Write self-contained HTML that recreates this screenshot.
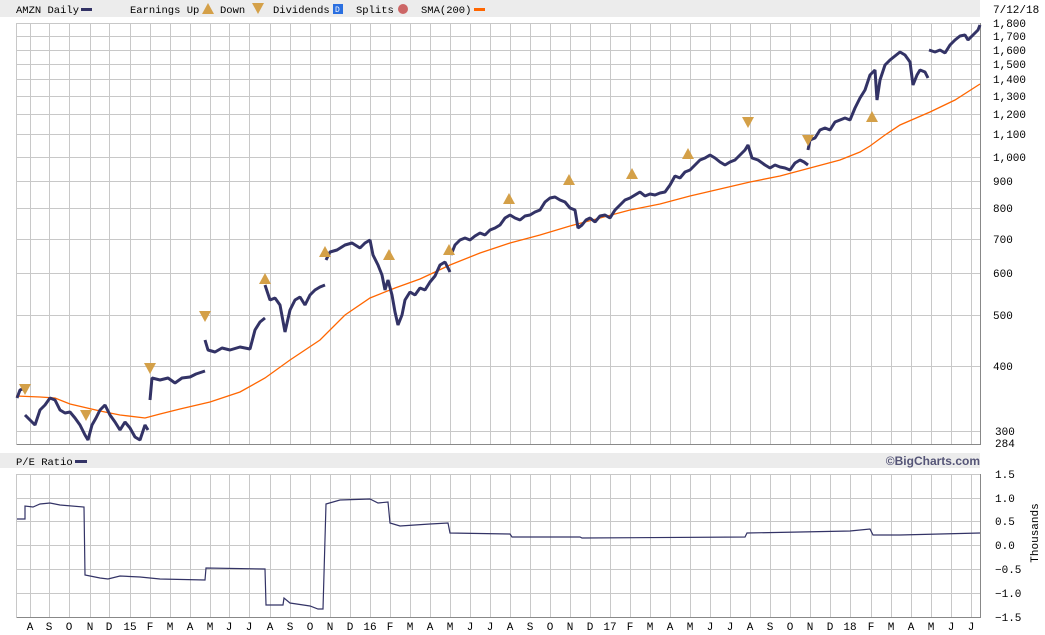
<!DOCTYPE html>
<html><head><meta charset="utf-8"><style>
html,body{margin:0;padding:0;background:#fff;width:1045px;height:635px;overflow:hidden}
svg{display:block;font-family:"Liberation Mono","DejaVu Sans Mono",monospace;font-size:11px}
</style></head><body>
<svg width="1045" height="635" xmlns="http://www.w3.org/2000/svg">
<rect x="0" y="0" width="980" height="17" fill="#ececec"/>
<g font-size="10.5">
<text x="16" y="13" fill="#000">AMZN Daily</text>
<text x="130" y="13">Earnings Up</text>
<text x="220" y="13">Down</text>
<text x="273" y="13">Dividends</text>
<text x="356" y="13">Splits</text>
<text x="421" y="13">SMA(200)</text>
</g>
<rect x="81" y="8" width="11" height="3" fill="#333366"/>
<polygon points="208,3 202,14 214,14" fill="#d4a048"/>
<polygon points="252,3 264,3 258,14" fill="#d4a048"/>
<rect x="333" y="4" width="10" height="10" fill="#2a6fe0"/><text x="335" y="12" fill="#fff" font-size="8">D</text>
<circle cx="403" cy="9" r="5" fill="#cc6666"/>
<rect x="474" y="8" width="11" height="3" fill="#ff6600"/>
<text x="993" y="13">7/12/18</text>

<g stroke="#c8c8c8" stroke-width="1" fill="none">
<path d="M16.5 23V444 M30.5 23V444 M49.5 23V444 M69.5 23V444 M90.5 23V444 M109.5 23V444 M130.5 23V444 M150.5 23V444 M170.5 23V444 M190.5 23V444 M210.5 23V444 M229.5 23V444 M249.5 23V444 M270.5 23V444 M290.5 23V444 M310.5 23V444 M330.5 23V444 M350.5 23V444 M370.5 23V444 M390.5 23V444 M410.5 23V444 M430.5 23V444 M450.5 23V444 M470.5 23V444 M490.5 23V444 M510.5 23V444 M530.5 23V444 M550.5 23V444 M570.5 23V444 M590.5 23V444 M610.5 23V444 M630.5 23V444 M650.5 23V444 M670.5 23V444 M690.5 23V444 M710.5 23V444 M730.5 23V444 M750.5 23V444 M770.5 23V444 M790.5 23V444 M810.5 23V444 M830.5 23V444 M850.5 23V444 M871.5 23V444 M891.5 23V444 M911.5 23V444 M931.5 23V444 M951.5 23V444 M971.5 23V444"/>
<path d="M16 23.5H980 M16 36.5H980 M16 50.5H980 M16 64.5H980 M16 79.5H980 M16 96.5H980 M16 114.5H980 M16 134.5H980 M16 157.5H980 M16 181.5H980 M16 208.5H980 M16 239.5H980 M16 273.5H980 M16 315.5H980 M16 366.5H980 M16 431.5H980"/>
</g>
<path d="M16.5 444.5H980.5V23" stroke="#888" fill="none"/>
<g font-size="11" fill="#000">
<text x="993" y="27">1,800</text><text x="993" y="40">1,700</text><text x="993" y="54">1,600</text><text x="993" y="68">1,500</text><text x="993" y="83">1,400</text><text x="993" y="100">1,300</text><text x="993" y="118">1,200</text><text x="993" y="138">1,100</text><text x="993" y="161">1,000</text><text x="993" y="185">900</text><text x="993" y="212">800</text><text x="993" y="243">700</text><text x="993" y="277">600</text><text x="993" y="319">500</text><text x="993" y="370">400</text><text x="995" y="435">300</text><text x="995" y="447">284</text>
</g>
<polyline fill="none" stroke="#ff6600" stroke-width="1.3" points="16,396 40,397 55,398 70,404 100,411 120,415 145,418 160,414 180,409 210,402 240,392 265,378 290,360 320,340 345,315 370,298 395,288 420,279 450,265 480,253 510,243 540,235 570,226 600,218 630,210 660,204 690,196 720,189 750,182 780,176 810,168 840,160 860,152 870,146 885,135 900,125 930,112 955,100 980,84"/>
<g fill="none" stroke="#333366" stroke-width="3" stroke-linejoin="bevel">
<polyline points="17,398 20,390 25,388"/>
<polyline points="25,415 30,420 35,425 40,410 45,405 50,398 55,400 60,410 65,413 70,412 75,418 80,425 85,435 88,440 92,425 96,418 100,410 105,405 110,415 115,422 120,430 125,422 130,428 135,437 140,440 145,425 148,430"/>
<polyline points="150,400 152,378 160,380 168,378 175,383 182,378 190,377 196,374 205,371"/>
<polyline points="205,340 208,350 215,352 222,348 230,350 240,347 250,349 255,330 260,322 265,318"/>
<polyline points="265,285 270,300 275,298 280,305 285,332 290,310 295,300 300,297 305,305 310,295 315,290 320,287 325,285"/>
<polyline points="326,260 330,252 337,250 345,245 352,243 360,248 365,243 370,240 373,255 378,265 382,275 385,290 388,280 392,295 395,312 398,325 402,315 405,300 410,292 415,295 420,288 425,290 430,282 435,276 440,265 445,262 450,272"/>
<polyline points="451,255 455,245 460,240 465,238 470,240 475,236 480,233 485,235 490,230 495,228 500,225 505,218 510,215 515,218 520,220 525,216 530,215 535,212 540,210 545,202 550,198 555,197 560,200 565,202 570,208 575,210 578,228 582,225 586,220 590,218 595,222 600,216 605,215 610,218 615,210 620,205 625,200 630,198 635,195 640,192 645,196 650,194 655,195 660,193 665,192 670,185 675,176 680,178 685,172 690,170 695,165 700,160 705,158 710,155 715,158 720,162 725,165 730,162 735,160 740,155 745,150 748,145 752,158 758,160 765,165 770,168 775,165 780,167 785,168 790,170 795,163 800,160 804,162 808,165"/>
<polyline points="808,150 810,140 815,138 820,130 825,128 830,130 835,122 840,120 845,118 850,120 855,108 860,98 865,90 870,75 875,70 877,100 880,80 885,65 890,60 895,56 900,52 905,55 910,62 913,85 917,75 920,70 925,72 928,78"/>
<polyline points="929,50 935,52 940,50 945,53 950,45 955,40 960,36 965,35 968,40 970,38 974,34 978,30 980,25"/>
</g>
<g fill="#d4a048">
<polygon points="19,384 31,384 25,395"/>
<polygon points="80,410 92,410 86,421"/>
<polygon points="144,363 156,363 150,374"/>
<polygon points="199,311 211,311 205,322"/>
<polygon points="265,273 259,284 271,284"/>
<polygon points="325,246 319,257 331,257"/>
<polygon points="389,249 383,260 395,260"/>
<polygon points="449,244 443,255 455,255"/>
<polygon points="509,193 503,204 515,204"/>
<polygon points="569,174 563,185 575,185"/>
<polygon points="632,168 626,179 638,179"/>
<polygon points="688,148 682,159 694,159"/>
<polygon points="742,117 754,117 748,128"/>
<polygon points="802,135 814,135 808,146"/>
<polygon points="872,111 866,122 878,122"/>
</g>

<rect x="0" y="453" width="980" height="15" fill="#ececec"/>
<text x="16" y="465" font-size="10.5">P/E Ratio</text>
<rect x="75" y="460" width="12" height="3" fill="#333366"/>
<text x="980" y="465" text-anchor="end" font-family="Liberation Sans,sans-serif" font-weight="bold" font-size="12" fill="#555577">©BigCharts.com</text>

<g stroke="#c8c8c8" stroke-width="1" fill="none">
<path d="M16.5 474V617 M30.5 474V617 M49.5 474V617 M69.5 474V617 M90.5 474V617 M109.5 474V617 M130.5 474V617 M150.5 474V617 M170.5 474V617 M190.5 474V617 M210.5 474V617 M229.5 474V617 M249.5 474V617 M270.5 474V617 M290.5 474V617 M310.5 474V617 M330.5 474V617 M350.5 474V617 M370.5 474V617 M390.5 474V617 M410.5 474V617 M430.5 474V617 M450.5 474V617 M470.5 474V617 M490.5 474V617 M510.5 474V617 M530.5 474V617 M550.5 474V617 M570.5 474V617 M590.5 474V617 M610.5 474V617 M630.5 474V617 M650.5 474V617 M670.5 474V617 M690.5 474V617 M710.5 474V617 M730.5 474V617 M750.5 474V617 M770.5 474V617 M790.5 474V617 M810.5 474V617 M830.5 474V617 M850.5 474V617 M871.5 474V617 M891.5 474V617 M911.5 474V617 M931.5 474V617 M951.5 474V617 M971.5 474V617"/>
<path d="M16 474.5H980 M16 498.5H980 M16 521.5H980 M16 545.5H980 M16 569.5H980 M16 593.5H980"/>
</g>
<path d="M16.5 617.5H980.5V474" stroke="#888" fill="none"/>
<polyline fill="none" stroke="#333366" stroke-width="1.2" points="17,519 25,519 25,506 33,507 40,504 50,503 60,505 84,507 85,575 100,578 108,579 120,576 140,577 160,579 205,580 206,568 265,569 266,605 283,605 284,598 290,603 310,606 318,609 323,609 326,504 340,500 370,499 378,503 388,502 390,523 400,526 430,524 448,523 450,533 510,534 512,537 580,537 582,538 745,537 747,533 800,532 850,531 870,529 873,535 900,535 940,534 980,533"/>
<g font-size="11">
<text x="995" y="478">1.5</text><text x="995" y="502">1.0</text><text x="995" y="525">0.5</text><text x="995" y="549">0.0</text><text x="995" y="573">−0.5</text><text x="995" y="597">−1.0</text><text x="995" y="621">−1.5</text>
<text transform="translate(1038,533) rotate(-90)" text-anchor="middle">Thousands</text>
</g>
<g font-size="11" text-anchor="middle">
<text x="30" y="630">A</text><text x="49" y="630">S</text><text x="69" y="630">O</text><text x="90" y="630">N</text><text x="109" y="630">D</text><text x="130" y="630">15</text><text x="150" y="630">F</text><text x="170" y="630">M</text><text x="190" y="630">A</text><text x="210" y="630">M</text><text x="229" y="630">J</text><text x="249" y="630">J</text><text x="270" y="630">A</text><text x="290" y="630">S</text><text x="310" y="630">O</text><text x="330" y="630">N</text><text x="350" y="630">D</text><text x="370" y="630">16</text><text x="390" y="630">F</text><text x="410" y="630">M</text><text x="430" y="630">A</text><text x="450" y="630">M</text><text x="470" y="630">J</text><text x="490" y="630">J</text><text x="510" y="630">A</text><text x="530" y="630">S</text><text x="550" y="630">O</text><text x="570" y="630">N</text><text x="590" y="630">D</text><text x="610" y="630">17</text><text x="630" y="630">F</text><text x="650" y="630">M</text><text x="670" y="630">A</text><text x="690" y="630">M</text><text x="710" y="630">J</text><text x="730" y="630">J</text><text x="750" y="630">A</text><text x="770" y="630">S</text><text x="790" y="630">O</text><text x="810" y="630">N</text><text x="830" y="630">D</text><text x="850" y="630">18</text><text x="871" y="630">F</text><text x="891" y="630">M</text><text x="911" y="630">A</text><text x="931" y="630">M</text><text x="951" y="630">J</text><text x="971" y="630">J</text>
</g>
</svg>
</body></html>
